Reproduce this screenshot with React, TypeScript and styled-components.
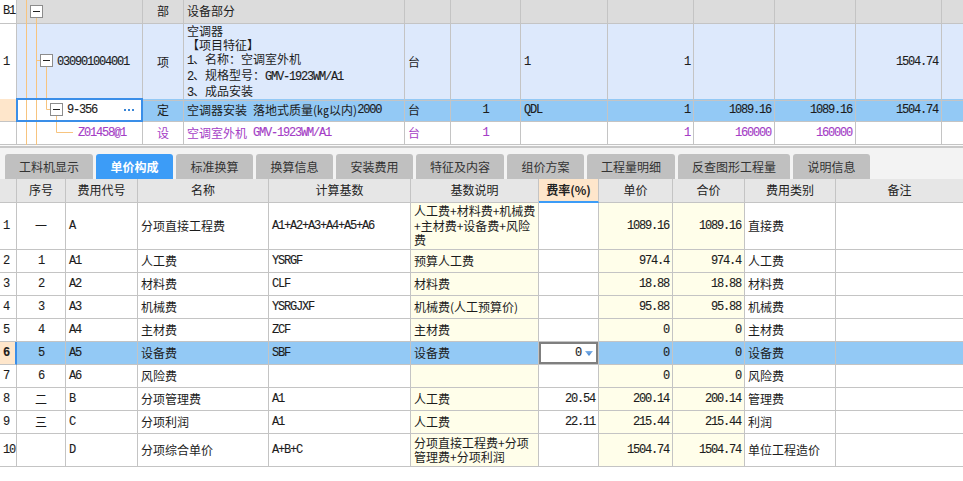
import React from "react";
import styled, { createGlobalStyle, css } from "styled-components";

const CJK = `"Noto Sans CJK SC", "Noto Sans", sans-serif`;
const MONO = `"Liberation Mono", "Noto Sans CJK SC", monospace`;

const colors = {
  text: "#1c1c1c",
  line: "#c4c4c4",
  head: "#dcdcdc",
  head2: "#e6e6e6",
  itemRow: "#dde9fc",
  selected: "#93c9f5",
  peach: "#fee6cb",
  yellow: "#fffeea",
  purple: "#a43dc6",
  tree: "#f7c47f",
  accent: "#3c9cf7",
  focus: "#3a8ee8",
};

const TOP_COLS = "17px 126px 41px 221px 46px 70px 87px 86px 81px 81px 86px 1fr";
const BOTTOM_COLS = "17px 49px 72px 131px 142px 128px 60px 74px 72px 91px 1fr";

const GlobalStyle = createGlobalStyle`
  html, body { margin: 0; padding: 0; background: #fff; }
  body {
    font-family: ${CJK};
    font-size: 12px;
    color: ${colors.text};
  }
`;

const monoText = css`
  font-family: ${MONO};
  letter-spacing: -1.2px;
  -webkit-text-stroke: 0.12px currentColor;
`;

const Page = styled.div`
  width: 963px;
  height: 481px;
  display: flex;
  flex-direction: column;
  background: #fff;
  overflow: hidden;
`;

const Grid = styled.div`
  display: flex;
  flex-direction: column;
`;

const Row = styled.div<{ $cols: string; $h: number; $bg?: string; $color?: string }>`
  display: grid;
  grid-template-columns: ${(p) => p.$cols};
  height: ${(p) => p.$h}px;
  background: ${(p) => p.$bg ?? "#fff"};
  color: ${(p) => p.$color ?? colors.text};
`;

type Align = "left" | "center" | "right";
const justify: Record<Align, string> = { left: "flex-start", center: "center", right: "flex-end" };

const Cell = styled.div<{ $align?: Align; $bg?: string; $mono?: boolean; $bold?: boolean }>`
  position: relative;
  display: flex;
  align-items: center;
  justify-content: ${(p) => justify[p.$align ?? "left"]};
  min-width: 0;
  padding: 0 3px;
  box-sizing: border-box;
  border-right: 1px solid ${colors.line};
  border-bottom: 1px solid ${colors.line};
  background: ${(p) => p.$bg ?? "transparent"};
  white-space: nowrap;
  line-height: 14.5px;
  font-weight: ${(p) => (p.$bold ? 700 : 400)};
  ${(p) => p.$mono && monoText}
  &:last-child {
    border-right: none;
  }
`;

const Lat = styled.span`
  ${monoText}
`;

const RowNum = styled(Cell)<{ $current?: boolean }>`
  padding: 0 1px 0 3px;
  ${(p) =>
    p.$current &&
    css`
      border-right: 2px solid ${colors.focus};
    `}
`;

const HeadCell = styled(Cell)<{ $sorted?: boolean }>`
  ${(p) =>
    p.$sorted &&
    css`
      background: ${colors.peach};
      font-weight: 700;
      border-bottom: 2px solid ${colors.accent};
    `}
`;

const TreeCell = styled(Cell)<{ $indent: number; $focused?: boolean }>`
  padding-left: ${(p) => p.$indent}px;
  ${(p) =>
    p.$focused &&
    css`
      background: #fff;
      &::after {
        content: "";
        position: absolute;
        top: -1px;
        left: -1px;
        right: -1px;
        bottom: -1px;
        border: 2px solid ${colors.focus};
        pointer-events: none;
      }
    `}
`;

const TreeText = styled.span`
  position: relative;
  ${monoText}
`;

const TreeSvg = styled.svg`
  position: absolute;
  left: 0;
  top: 0;
  overflow: visible;
`;

const MoreBtn = styled.svg`
  position: relative;
  margin-left: auto;
  margin-right: 5px;
`;

const EditCell = styled(Cell)`
  background: #fff;
  box-shadow: inset 0 0 0 2px #7f7f7f;
  padding-right: 5px;
  gap: 4px;
`;

const Splitter = styled.div`
  height: 3px;
  box-sizing: border-box;
  border-top: 1px solid #fafafa;
  background: #c8c8c8;
`;

const TabBar = styled.div`
  display: flex;
  align-items: flex-end;
  gap: 3px;
  height: 31px;
  padding: 0 5px;
  box-sizing: border-box;
  background: #f3f3f3;
`;

const Tab = styled.div<{ $active?: boolean }>`
  height: 25px;
  min-width: 77px;
  padding: 0 14px;
  box-sizing: border-box;
  display: flex;
  align-items: center;
  justify-content: center;
  border-radius: 3px 3px 0 0;
  font-size: 12px;
  background: ${(p) => (p.$active ? colors.accent : "#c0c0c0")};
  color: ${(p) => (p.$active ? "#fff" : "#333")};
  font-weight: ${(p) => (p.$active ? 700 : 400)};
`;

type Box = [number, number];

const TreeLines: React.FC<{ h: number; d: string; boxes?: Box[] }> = ({ h, d, boxes = [] }) => (
  <TreeSvg width={126} height={h}>
    <path d={d} stroke={colors.tree} strokeWidth={1} fill="none" />
    {boxes.map(([x, y]) => (
      <g key={`${x}-${y}`}>
        <rect x={x + 0.5} y={y + 0.5} width={12} height={12} fill="#fff" stroke="#8c8c8c" />
        <path d={`M${x + 3} ${y + 6.5}H${x + 10}`} stroke="#222" />
      </g>
    ))}
  </TreeSvg>
);

const isAscii = (s: string) => /^[\x20-\x7e]*$/.test(s);

const empty = (n: number, prefix: string) =>
  Array.from({ length: n }, (_, i) => <Cell key={`${prefix}${i}`} />);

type FeeRow = {
  seq: string;
  code: string;
  name: string;
  base: string;
  desc: string[];
  rate: string;
  price: string;
  total: string;
  kind: string;
  h: number;
};

const fees: FeeRow[] = [
  {
    seq: "一", code: "A", name: "分项直接工程费", base: "A1+A2+A3+A4+A5+A6",
    desc: ["人工费+材料费+机械费", "+主材费+设备费+风险", "费"],
    rate: "", price: "1089.16", total: "1089.16", kind: "直接费", h: 47,
  },
  { seq: "1", code: "A1", name: "人工费", base: "YSRGF", desc: ["预算人工费"], rate: "", price: "974.4", total: "974.4", kind: "人工费", h: 23 },
  { seq: "2", code: "A2", name: "材料费", base: "CLF", desc: ["材料费"], rate: "", price: "18.88", total: "18.88", kind: "材料费", h: 23 },
  { seq: "3", code: "A3", name: "机械费", base: "YSRGJXF", desc: ["机械费(人工预算价)"], rate: "", price: "95.88", total: "95.88", kind: "机械费", h: 23 },
  { seq: "4", code: "A4", name: "主材费", base: "ZCF", desc: ["主材费"], rate: "", price: "0", total: "0", kind: "主材费", h: 23 },
  { seq: "5", code: "A5", name: "设备费", base: "SBF", desc: ["设备费"], rate: "0", price: "0", total: "0", kind: "设备费", h: 23 },
  { seq: "6", code: "A6", name: "风险费", base: "", desc: [""], rate: "", price: "0", total: "0", kind: "风险费", h: 23 },
  { seq: "二", code: "B", name: "分项管理费", base: "A1", desc: ["人工费"], rate: "20.54", price: "200.14", total: "200.14", kind: "管理费", h: 23 },
  { seq: "三", code: "C", name: "分项利润", base: "A1", desc: ["人工费"], rate: "22.11", price: "215.44", total: "215.44", kind: "利润", h: 23 },
  {
    seq: "", code: "D", name: "分项综合单价", base: "A+B+C",
    desc: ["分项直接工程费+分项", "管理费+分项利润"],
    rate: "", price: "1504.74", total: "1504.74", kind: "单位工程造价", h: 33,
  },
];

const CURRENT = 5;

const tabs = [
  "工料机显示",
  "单价构成",
  "标准换算",
  "换算信息",
  "安装费用",
  "特征及内容",
  "组价方案",
  "工程量明细",
  "反查图形工程量",
  "说明信息",
];

const feeHeads = ["序号", "费用代号", "名称", "计算基数", "基数说明", "费率(%)", "单价", "合价", "费用类别", "备注"];

const Lines: React.FC<{ lines: string[] }> = ({ lines }) => (
  <span>
    {lines.map((l, i) => (
      <React.Fragment key={i}>
        {i > 0 && <br />}
        {l}
      </React.Fragment>
    ))}
  </span>
);

const TopGrid: React.FC = () => (
  <Grid>
    <Row $cols={TOP_COLS} $h={24} $bg={colors.head}>
      <RowNum $mono $bg="#fff">B1</RowNum>
      <TreeCell $indent={40}>
        <TreeLines h={24} d="M9.5 0V24M19.5 18V24" boxes={[[13, 5]]} />
      </TreeCell>
      <Cell $align="center">部</Cell>
      <Cell>设备部分</Cell>
      {empty(8, "h")}
    </Row>

    <Row $cols={TOP_COLS} $h={75} $bg={colors.itemRow}>
      <RowNum $mono $bg="#fff">1</RowNum>
      <TreeCell $indent={40}>
        <TreeLines h={75} d="M9.5 0V75M19.5 0V75M19.5 36.5H23M29.5 43V75" boxes={[[23, 30]]} />
        <TreeText>030901004001</TreeText>
      </TreeCell>
      <Cell $align="center">项</Cell>
      <Cell style={{ lineHeight: "14px" }}>
        <span>
          空调器
          <br />【项目特征】
          <br />
          <Lat>1</Lat>、名称：空调室外机
          <br />
          <Lat>2</Lat>、规格型号：<Lat>GMV-1923WM/A1</Lat>
          <br />
          <Lat>3</Lat>、成品安装
        </span>
      </Cell>
      <Cell>台</Cell>
      <Cell />
      <Cell $mono>1</Cell>
      <Cell $mono $align="right">1</Cell>
      <Cell />
      <Cell />
      <Cell $mono $align="right">1504.74</Cell>
      <Cell />
    </Row>

    <Row $cols={TOP_COLS} $h={23} $bg={colors.selected}>
      <RowNum $bg={colors.peach} />
      <TreeCell $indent={50} $focused>
        <TreeLines h={23} d="M9.5 0V23M19.5 0V23M29.5 0V10.5M29.5 10.5H33M39.5 17V23" boxes={[[33, 4]]} />
        <TreeText>9-356</TreeText>
        <MoreBtn width={10} height={2} viewBox="0 0 10 2">
          <rect x={0} y={0} width={2} height={2} fill="#3a86d6" />
          <rect x={4} y={0} width={2} height={2} fill="#3a86d6" />
          <rect x={8} y={0} width={2} height={2} fill="#3a86d6" />
        </MoreBtn>
      </TreeCell>
      <Cell $align="center">定</Cell>
      <Cell>
        空调器安装<Lat>{"\u00a0"}</Lat>落地式质量(㎏以内)<Lat>2000</Lat>
      </Cell>
      <Cell>台</Cell>
      <Cell $mono $align="center">1</Cell>
      <Cell $mono>QDL</Cell>
      <Cell $mono $align="right">1</Cell>
      <Cell $mono $align="right">1089.16</Cell>
      <Cell $mono $align="right">1089.16</Cell>
      <Cell $mono $align="right">1504.74</Cell>
      <Cell />
    </Row>

    <Row $cols={TOP_COLS} $h={23} $color={colors.purple}>
      <RowNum />
      <TreeCell $indent={61}>
        <TreeLines h={23} d="M9.5 0V23M19.5 0V23M39.5 0V10.5M39.5 10.5H56" />
        <TreeText>Z01458@1</TreeText>
      </TreeCell>
      <Cell $align="center">设</Cell>
      <Cell>
        空调室外机<Lat>{"\u00a0"}GMV-1923WM/A1</Lat>
      </Cell>
      <Cell>台</Cell>
      <Cell $mono $align="center">1</Cell>
      <Cell />
      <Cell $mono $align="right">1</Cell>
      <Cell $mono $align="right">160000</Cell>
      <Cell $mono $align="right">160000</Cell>
      <Cell />
      <Cell />
    </Row>
  </Grid>
);

const Triangle = () => (
  <svg width={8} height={5} viewBox="0 0 8 5">
    <defs>
      <linearGradient id="tri" x1="0" y1="0" x2="0" y2="1">
        <stop offset="0" stopColor="#7fb2e8" />
        <stop offset="1" stopColor="#3f7fcc" />
      </linearGradient>
    </defs>
    <path d="M0 0H8L4 5Z" fill="url(#tri)" />
  </svg>
);

const FeeGrid: React.FC = () => (
  <Grid>
    <Row $cols={BOTTOM_COLS} $h={24} $bg={colors.head2} $color="#222">
      <RowNum />
      {feeHeads.map((h) => (
        <HeadCell key={h} $align="center" $sorted={h === "费率(%)"}>
          {h}
        </HeadCell>
      ))}
    </Row>
    {fees.map((f, i) => {
      const cur = i === CURRENT;
      const yellow = cur ? undefined : colors.yellow;
      return (
        <Row key={i} $cols={BOTTOM_COLS} $h={f.h} $bg={cur ? colors.selected : "#fff"}>
          <RowNum $mono $bold={cur} $current={cur} $bg={cur ? colors.peach : "#fff"}>
            {i + 1}
          </RowNum>
          <Cell $align="center" $mono={isAscii(f.seq)}>{f.seq}</Cell>
          <Cell $mono>{f.code}</Cell>
          <Cell>{f.name}</Cell>
          <Cell $mono>{f.base}</Cell>
          <Cell $bg={yellow}>
            <Lines lines={f.desc} />
          </Cell>
          {cur ? (
            <EditCell $mono $align="right">
              <span>{f.rate}</span>
              <Triangle />
            </EditCell>
          ) : (
            <Cell $mono $align="right">{f.rate}</Cell>
          )}
          <Cell $mono $align="right" $bg={yellow}>{f.price}</Cell>
          <Cell $mono $align="right" $bg={yellow}>{f.total}</Cell>
          <Cell>{f.kind}</Cell>
          <Cell />
        </Row>
      );
    })}
  </Grid>
);

export default function App() {
  return (
    <>
      <GlobalStyle />
      <Page>
        <TopGrid />
        <Splitter />
        <TabBar>
          {tabs.map((t) => (
            <Tab key={t} $active={t === "单价构成"}>
              {t}
            </Tab>
          ))}
        </TabBar>
        <FeeGrid />
      </Page>
    </>
  );
}
